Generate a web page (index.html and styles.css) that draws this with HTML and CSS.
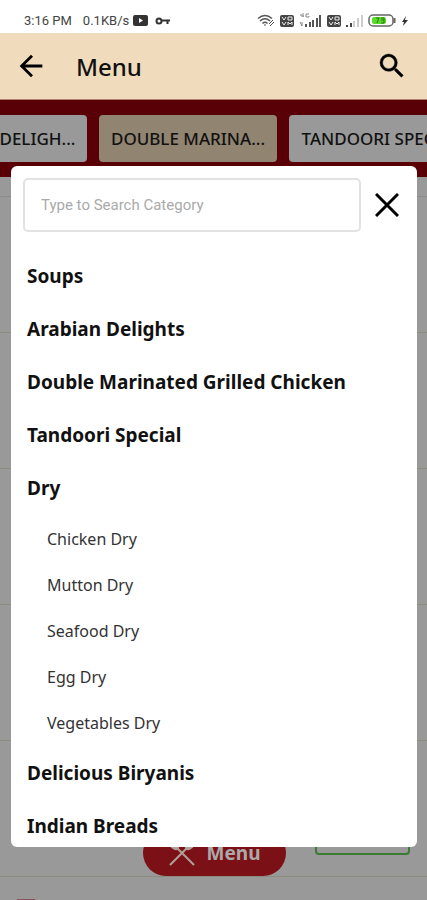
FILE: index.html
```html
<!DOCTYPE html>
<html lang="en">
  <head>
    <meta charset="UTF-8" />
    <meta name="viewport" content="width=device-width, initial-scale=1.0" />
    <title>Menu</title>
    <link rel="stylesheet" href="styles.css">
  </head>
  <body>
    <div class="status-bar">
      <span class="time">3:16 PM</span>
      <span class="speed">0.1KB/s</span>
      <svg width="15" height="11" viewBox="0 0 15 11"><rect width="15" height="11" rx="2" fill="#333" /><path d="M6 3l4 2.500-4 2.500z" fill="#fff" /></svg>
      <svg class="key" width="15" height="8" viewBox="0 0 15 8" fill="none" stroke="#333" stroke-width="2"><circle cx="4" cy="4" r="2.500" /><path d="M6.500 3.500H15M12.500 3v4" /></svg>
      <div class="status-icons">
        <svg width="18" height="13" viewBox="0 0 18 13" fill="none" stroke="#555" stroke-width="1.500"><path d="M1 4.500Q8 -1.500 15 4.500M3 7Q8 2.500 13 7M5.500 9.500Q8 7 10.500 9.500" /><path d="M8 10v2M12 10l4-4M13 12l4-4" stroke-width="1" /></svg>
        <svg width="14" height="12" viewBox="0 0 14 12"><rect width="14" height="12" rx="2" fill="#444" /><path d="M2 2l2 3 2-3M8 2h4v3H8zM2 7l2 3 2-3M8 10V7l2 2 2-2v3" fill="none" stroke="#eee" /></svg>
        <svg width="23" height="15" viewBox="0 0 23 15"><path d="M2 1v2h3M4 0v4M10 1H7v3h3V3M1 9l2 4M3 9v4" fill="none" stroke="#888" /><path d="M6 14v-3h2v3zM10 14V9h2v5zM13 14V7h2v7zM17 14V5h2v9zM20 14V2h2v12z" fill="#555" /></svg>
        <svg width="14" height="12" viewBox="0 0 14 12"><rect width="14" height="12" rx="2" fill="#444" /><path d="M2 2l2 3 2-3M8 2h4v3H8zM2 7l2 3 2-3M8 10V7l2 2 2-2v3" fill="none" stroke="#eee" /></svg>
        <svg width="17" height="15" viewBox="0 0 17 15"><path d="M0 14v-2h2v2zM4 14v-4h2v4z" fill="#444" /><path d="M7 14V8h2v6zM11 14V5h2v9zM15 14V2h2v12z" fill="#ccc" /></svg>
        <svg class="battery" width="28" height="13" viewBox="0 0 28 13"><rect x="1" y="1" width="24" height="11" rx="4" fill="#fff" stroke="#666" stroke-width="1.500" /><path d="M26.500 4v5" stroke="#666" stroke-width="2" /><rect x="4" y="3" width="14" height="7" rx="2" fill="#55dc28" /><path d="M8 4h3l-2 5M13 4h3v5h-3M13 6h3" fill="none" stroke="#38701c" /></svg>
        <svg width="8" height="12" viewBox="0 0 8 12"><path d="M5 1L1 7h2l-1 4 5-6H4z" fill="#333" /></svg>
      </div>
    </div>

    <header class="app-bar">
      <button class="icon-button" aria-label="Back">
        <svg width="34" height="34" viewBox="0 0 24 24"><path d="M20 11H7.830l5.590-5.590L12 4l-8 8 8 8 1.410-1.410L7.830 13H20v-2z" /></svg>
      </button>
      <h1>Menu</h1>
      <button class="icon-button" aria-label="Search">
        <svg width="32" height="32" viewBox="0 0 24 24"><path d="M15.500 14h-.79l-.28-.27A6.471 6.471 0 0 0 16 9.500 6.500 6.500 0 1 0 9.500 16c1.610 0 3.090-.59 4.230-1.570l.27.28v.79l5 4.990L20.490 19l-4.990-5zm-6 0C7.010 14 5 11.990 5 9.500S7.010 5 9.500 5 14 7.010 14 9.500 11.990 14 9.500 14z" stroke="#000" stroke-width=".3" /></svg>
      </button>
    </header>

    <main class="page">
      <nav class="tabs" id="tabs">
        <button class="tab">ARABIAN DELIGH...</button>
        <button class="tab active">DOUBLE MARINA...</button>
        <button class="tab">TANDOORI SPECI...</button>
      </nav>

      <div class="dishes">
        <div class="dish-heading"></div>
        <div class="dish"></div>
        <div class="dish"></div>
        <div class="dish"></div>
        <div class="dish"></div>
        <div class="dish"><span class="add-box"></span></div>
        <div class="dish"><span class="food-mark"></span></div>
      </div>

      <button class="menu-button">
        <svg width="28" height="28" viewBox="0 0 28 28" fill="none" stroke="#b0a098" stroke-width="2"><path d="M2 26L20 8M26 26L9 9" /><ellipse cx="6" cy="6" rx="5" ry="3" transform="rotate(45 6 6)" fill="#aaa" /><ellipse cx="22" cy="6" rx="5" ry="3" transform="rotate(-45 22 6)" fill="#aaa" /></svg>
        Menu
      </button>

      <section class="category-panel">
        <form class="search">
          <input type="text" aria-label="Search category" placeholder="Type to Search Category" />
          <button type="button" class="close" aria-label="Close">
            <svg width="24" height="24" viewBox="0 0 24 24" fill="none" stroke="#000" stroke-width="3"><path d="M1 1l22 22M23 1L1 23" /></svg>
          </button>
        </form>
        <ul class="categories">
          <li><a href="#">Soups</a></li>
          <li><a href="#">Arabian Delights</a></li>
          <li><a href="#">Double Marinated Grilled Chicken</a></li>
          <li><a href="#">Tandoori Special</a></li>
          <li>
            <a href="#">Dry</a>
            <ul class="sub-categories">
              <li><a href="#">Chicken Dry</a></li>
              <li><a href="#">Mutton Dry</a></li>
              <li><a href="#">Seafood Dry</a></li>
              <li><a href="#">Egg Dry</a></li>
              <li><a href="#">Vegetables Dry</a></li>
            </ul>
          </li>
          <li><a href="#">Delicious Biryanis</a></li>
          <li><a href="#">Indian Breads</a></li>
        </ul>
      </section>
    </main>

    <script>
      // Bring the active category into view
      document.getElementById("tabs").scrollLeft = 103;
    </script>
  </body>
</html>
```
FILE: styles.css
```css
* {
  box-sizing: border-box;
}

body {
  display: flex;
  flex-direction: column;
  height: 100vh;
  margin: 0;
  overflow: hidden;
  font-family: "Noto Sans", "Open Sans", sans-serif;
  color: #111;
  background-color: #fff;
}

button {
  border: none;
  padding: 0;
  background: none;
  font-family: inherit;
  color: inherit;
  cursor: pointer;
}

svg {
  display: block;
  flex-shrink: 0;
}

a {
  color: inherit;
  text-decoration: none;
}

ul {
  list-style: none;
  margin: 0;
  padding: 0;
}

.status-bar {
  display: flex;
  align-items: center;
  height: 33px;
  padding: 8px 18px 0 24px;
  font-family: Roboto, sans-serif;
  font-size: 13px;
  color: #444;
}

.speed {
  margin: 0 4px 0 11px;
}

.key {
  margin-left: 7px;
}

.status-icons {
  display: flex;
  align-items: center;
  gap: 5px;
  margin-left: auto;
}

.app-bar {
  display: flex;
  align-items: center;
  height: 67px;
  padding: 0 19px 0 14px;
  background-color: #f0dcbc;
  border-bottom: 1px solid #b08070;
}

.app-bar h1 {
  flex: 1;
  margin: 0 0 0 28px;
  font-size: 24px;
  font-weight: 500;
}

.page {
  position: relative;
  flex: 1;
  min-height: 0;
  overflow: hidden;
  background-color: #999;
}

.tabs {
  display: flex;
  gap: 12px;
  padding: 15px 12px;
  overflow: hidden;
  background-color: #580005;
}

.tab {
  flex: 0 0 178px;
  height: 47px;
  border-radius: 4px;
  background-color: #999;
  font-size: 17px;
  font-weight: 500;
  white-space: nowrap;
}

.tab.active {
  background-color: #918470;
}

.dish-heading {
  height: 20px;
  border-bottom: 1px solid #8c8c8c;
}

.dish {
  display: flex;
  height: 136px;
  padding: 76px 17px 0;
  border-bottom: 1px solid #8d8b7c;
}

.add-box {
  width: 95px;
  height: 38px;
  margin-left: auto;
  border: 2px solid #3c7a36;
  border-radius: 4px;
}

.dish:last-child {
  padding-top: 22px;
}

.food-mark {
  width: 18px;
  height: 18px;
  border: 2px solid #87505c;
}

.menu-button {
  position: absolute;
  bottom: 24px;
  left: 50%;
  display: flex;
  align-items: center;
  justify-content: center;
  gap: 11px;
  width: 143px;
  height: 46px;
  margin-left: -71px;
  border-radius: 23px;
  background-color: #7b1116;
  font-size: 19px;
  font-weight: 700;
  color: #aaa;
}

.category-panel {
  position: absolute;
  top: 66px;
  right: 10px;
  bottom: 53px;
  left: 11px;
  overflow: hidden;
  border-radius: 6px;
  background-color: #fff;
}

.search {
  display: flex;
  align-items: center;
  gap: 14px;
  padding: 12px 18px 18px 12px;
}

.search input {
  flex: 1;
  min-width: 0;
  height: 54px;
  padding: 0 16px;
  border: 2px solid #e2e2e2;
  border-radius: 5px;
  font-family: Roboto, sans-serif;
  font-size: 15px;
}

.search input::placeholder {
  color: #aaa;
}

.categories {
  padding: 0 16px;
}

.categories a {
  display: block;
  font-size: 19px;
  font-weight: 700;
  line-height: 53px;
}

.categories .sub-categories {
  padding: 1px 0 1px 20px;
}

.sub-categories a {
  font-size: 16px;
  font-weight: 400;
  line-height: 46px;
  color: #333;
}
```
